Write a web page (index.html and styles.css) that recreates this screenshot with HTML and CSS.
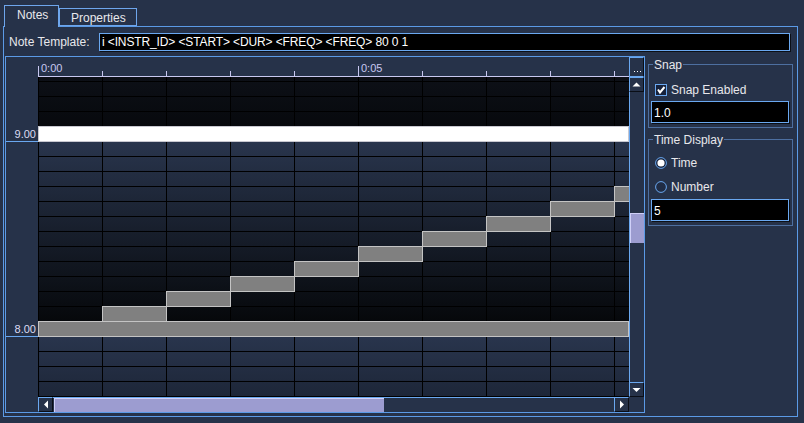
FILE: index.html
```html
<!DOCTYPE html>
<html>
<head>
<meta charset="utf-8">
<title>Notes</title>
<link rel="stylesheet" href="styles.css">
</head>
<body>
<div class="tabs">
  <div class="tab tab-active">Notes</div>
  <div class="tab tab-props">Properties</div>
</div>
<div class="panel">
  <div class="template-row">
    <span class="template-label">Note Template:</span>
    <div class="field template-field">i &lt;INSTR_ID&gt; &lt;START&gt; &lt;DUR&gt; &lt;FREQ&gt; &lt;FREQ&gt; 80 0 1</div>
  </div>
  <div class="main">
    <div class="roll">
      <div class="corner"></div>
      <div class="ruler">
        <span class="tick major" style="left:0px"></span>
        <span class="tick" style="left:64px"></span>
        <span class="tick" style="left:128px"></span>
        <span class="tick" style="left:192px"></span>
        <span class="tick" style="left:256px"></span>
        <span class="tick major" style="left:320px"></span>
        <span class="tick" style="left:384px"></span>
        <span class="tick" style="left:448px"></span>
        <span class="tick" style="left:512px"></span>
        <span class="tick" style="left:576px"></span>
        <span class="ruler-label" style="left:3px">0:00</span>
        <span class="ruler-label" style="left:323px">0:05</span>
      </div>
      <div class="sbtn menu-btn">
        <svg width="13" height="18" viewBox="0 0 13 18"><rect x="4" y="13" width="1" height="1" fill="#fff"/><rect x="7" y="13" width="1" height="1" fill="#fff"/><rect x="10" y="13" width="1" height="1" fill="#fff"/></svg>
      </div>

      <div class="keys">
        <div class="key-label" style="top:49px">9.00</div>
        <div class="key-label" style="top:244px">8.00</div>
      </div>
      <div class="canvas">
        <div class="note note-white" style="left:0px;top:49px;width:591px"></div>
        <div class="note" style="left:0px;top:244px;width:591px"></div>
        <div class="note" style="left:64px;top:229px;width:65px"></div>
        <div class="note" style="left:128px;top:214px;width:65px"></div>
        <div class="note" style="left:192px;top:199px;width:65px"></div>
        <div class="note" style="left:256px;top:184px;width:65px"></div>
        <div class="note" style="left:320px;top:169px;width:65px"></div>
        <div class="note" style="left:384px;top:154px;width:65px"></div>
        <div class="note" style="left:448px;top:139px;width:65px"></div>
        <div class="note" style="left:512px;top:124px;width:65px"></div>
        <div class="note" style="left:576px;top:109px;width:65px"></div>
      </div>
      <div class="vscroll">
        <div class="sbtn arrow-btn">
          <svg width="13" height="13" viewBox="0 0 13 13"><path d="M2.5 8.5 L6.5 4.5 L10.5 8.5 Z" fill="#fff"/></svg>
        </div>
        <div class="vtrack"><div class="thumb vthumb"></div></div>
        <div class="sbtn arrow-btn">
          <svg width="13" height="13" viewBox="0 0 13 13"><path d="M2.5 5 L6.5 9 L10.5 5 Z" fill="#fff"/></svg>
        </div>
      </div>

      <div class="corner"></div>
      <div class="hscroll">
        <div class="sbtn arrow-btn">
          <svg width="13" height="13" viewBox="0 0 13 13"><path d="M9 2.5 L5 6.5 L9 10.5 Z" fill="#fff"/></svg>
        </div>
        <div class="htrack"><div class="thumb hthumb"></div></div>
        <div class="sbtn arrow-btn">
          <svg width="13" height="13" viewBox="0 0 13 13"><path d="M5 2.5 L9 6.5 L5 10.5 Z" fill="#fff"/></svg>
        </div>
      </div>
      <div class="corner"></div>
    </div>

    <div class="side">
      <div class="group group-snap">
        <span class="group-title">Snap</span>
        <div class="opt-row">
          <svg class="opt-icon" width="12" height="12" viewBox="0 0 12 12"><rect x="0.5" y="0.5" width="11" height="11" fill="#16213a" stroke="#6aa8f0"/><path d="M3 5.5 L5 8.5 L9.5 3" fill="none" stroke="#fff" stroke-width="2"/></svg>
          <span>Snap Enabled</span>
        </div>
        <div class="field side-field">1.0</div>
      </div>
      <div class="group group-time">
        <span class="group-title">Time Display</span>
        <div class="opt-row">
          <svg class="opt-icon" width="12" height="12" viewBox="0 0 12 12"><circle cx="6" cy="6" r="5.4" fill="#16213a" stroke="#6aa8f0"/><circle cx="6" cy="6" r="3.6" fill="#fff"/></svg>
          <span>Time</span>
        </div>
        <div class="opt-row opt-row-2">
          <svg class="opt-icon" width="12" height="12" viewBox="0 0 12 12"><circle cx="6" cy="6" r="5.4" fill="#202c44" stroke="#6aa8f0"/></svg>
          <span>Number</span>
        </div>
        <div class="field side-field side-field-2">5</div>
      </div>
    </div>
  </div>
</div>
</body>
</html>
```

FILE: styles.css
```css
* { box-sizing: border-box; }

html, body {
  margin: 0;
  padding: 0;
}

body {
  width: 804px;
  height: 423px;
  overflow: hidden;
  background: #263249;
  font-family: "Liberation Sans", Arial, sans-serif;
  font-size: 12px;
  line-height: 14px;
  color: #e8e8ec;
}

/* ---------- tabs ---------- */
.tabs {
  display: flex;
  align-items: flex-start;
  height: 26px;
  padding-left: 4px;
  position: relative;
  z-index: 2;
}

.tab {
  border: 1px solid #6ea6ec;
  border-bottom: none;
  background: #263249;
}

.tab-active {
  margin-top: 5px;
  width: 55px;
  height: 22px;
  padding: 2px 0 0 12px;
}

.tab-props {
  margin-top: 8px;
  width: 78px;
  height: 18px;
  padding: 2px 0 0 11px;
  border-bottom: 1px solid #6ea6ec;
}

/* ---------- main panel ---------- */
.panel {
  margin-left: 3px;
  width: 795px;
  height: 391px;
  border: 1px solid #5b9ae6;
  padding-top: 6px;
}

.template-row {
  display: flex;
  align-items: center;
  height: 18px;
  padding-left: 5px;
}

.template-label {
  width: 90px;
  flex: none;
}

.field {
  background: #000;
  border: 1px solid #6aa8f0;
  box-shadow: 1px 1px 0 #0b0f16;
  color: #fff;
  white-space: nowrap;
  overflow: hidden;
}

.template-field {
  width: 691px;
  height: 18px;
  padding-left: 2px;
  line-height: 16px;
  letter-spacing: -0.12px;
}

.main {
  display: flex;
  gap: 3px;
  margin-top: 5px;
  margin-left: 1px;
}

/* ---------- piano roll ---------- */
.roll {
  width: 640px;
  height: 357px;
  border: 1px solid #5b9ae6;
  display: grid;
  grid-template-columns: 32px 591px 15px;
  grid-template-rows: 20px 320px 15px;
}

.ruler {
  position: relative;
  border-bottom: 1px solid #c8c8f0;
}

.tick {
  position: absolute;
  top: 14px;
  width: 1px;
  height: 5px;
  background: #c8c8f0;
}

.tick.major {
  top: 9px;
  height: 10px;
}

.ruler-label {
  position: absolute;
  top: 5px;
  font-size: 11px;
  line-height: 12px;
  color: #c8c8f0;
}

.keys {
  position: relative;
}

.key-label {
  position: absolute;
  left: 0;
  right: 0;
  height: 16px;
  border-bottom: 1px solid #6aa8f0;
  text-align: right;
  padding: 1px 2px 0 0;
  font-size: 11px;
  line-height: 14px;
  color: #dcdcf4;
}

.canvas {
  position: relative;
  overflow: hidden;
  background:
    repeating-linear-gradient(90deg, #000 0 1px, transparent 1px 64px),
    repeating-linear-gradient(180deg, transparent 0 4px, #000 4px 5px, transparent 5px 15px),
    linear-gradient(180deg, #0d1017 0px, #07090d 49px, #29354d 64px, #06080b 244px, #29354d 259px, #1d2638 320px);
}

.note {
  position: absolute;
  height: 16px;
  background: #808080;
  border: 1px solid #c4c4c4;
}

.note-white {
  background: #fff;
  border-color: #c8c8d0;
}

/* ---------- scrollbars ---------- */
.sbtn {
  display: flex;
  align-items: center;
  justify-content: center;
  background: #263249;
  border: 1px solid;
  border-color: #6aa8f0 #0a0e16 #0a0e16 #6aa8f0;
}

.menu-btn {
  height: 20px;
  border-bottom-color: #6aa8f0;
}

.vscroll {
  display: flex;
  flex-direction: column;
}

.vscroll .arrow-btn {
  height: 15px;
  flex: none;
}

.vtrack {
  flex: 1;
  border-left: 1px solid #6aa8f0;
  background: #263249;
}

.vthumb {
  margin-top: 121px;
  height: 30px;
}

.thumb {
  background: #9c9cd0;
  border-top: 1px solid #d0d0f8;
  border-left: 1px solid #d0d0f8;
}

.hscroll {
  display: flex;
}

.hscroll .arrow-btn {
  width: 15px;
  flex: none;
}

.htrack {
  flex: 1;
  border-top: 1px solid #6aa8f0;
  background: #263249;
  padding-left: 1px;
}

.hthumb {
  width: 330px;
  height: 100%;
}

/* ---------- side panel ---------- */
.side {
  width: 145px;
  padding-top: 8px;
}

.group {
  position: relative;
  border: 1px solid #4d6fa0;
}

.group-title {
  position: absolute;
  top: -7px;
  left: 4px;
  padding: 0 1px;
  background: #263249;
  color: #e8e8ec;
}

.group-snap {
  height: 64px;
  padding-top: 15px;
}

.group-time {
  margin-top: 11px;
  height: 87px;
  padding-top: 13px;
}

.opt-row {
  display: flex;
  align-items: center;
  gap: 4px;
  height: 20px;
  padding-left: 6px;
}

.opt-row-2 {
  margin-top: 4px;
}

.opt-icon {
  flex: none;
}

.side-field {
  margin: 1px 0 0 2px;
  width: 138px;
  height: 22px;
  padding: 2px 0 0 2px;
  line-height: 18px;
}

.side-field-2 {
  margin-top: 2px;
}
```
